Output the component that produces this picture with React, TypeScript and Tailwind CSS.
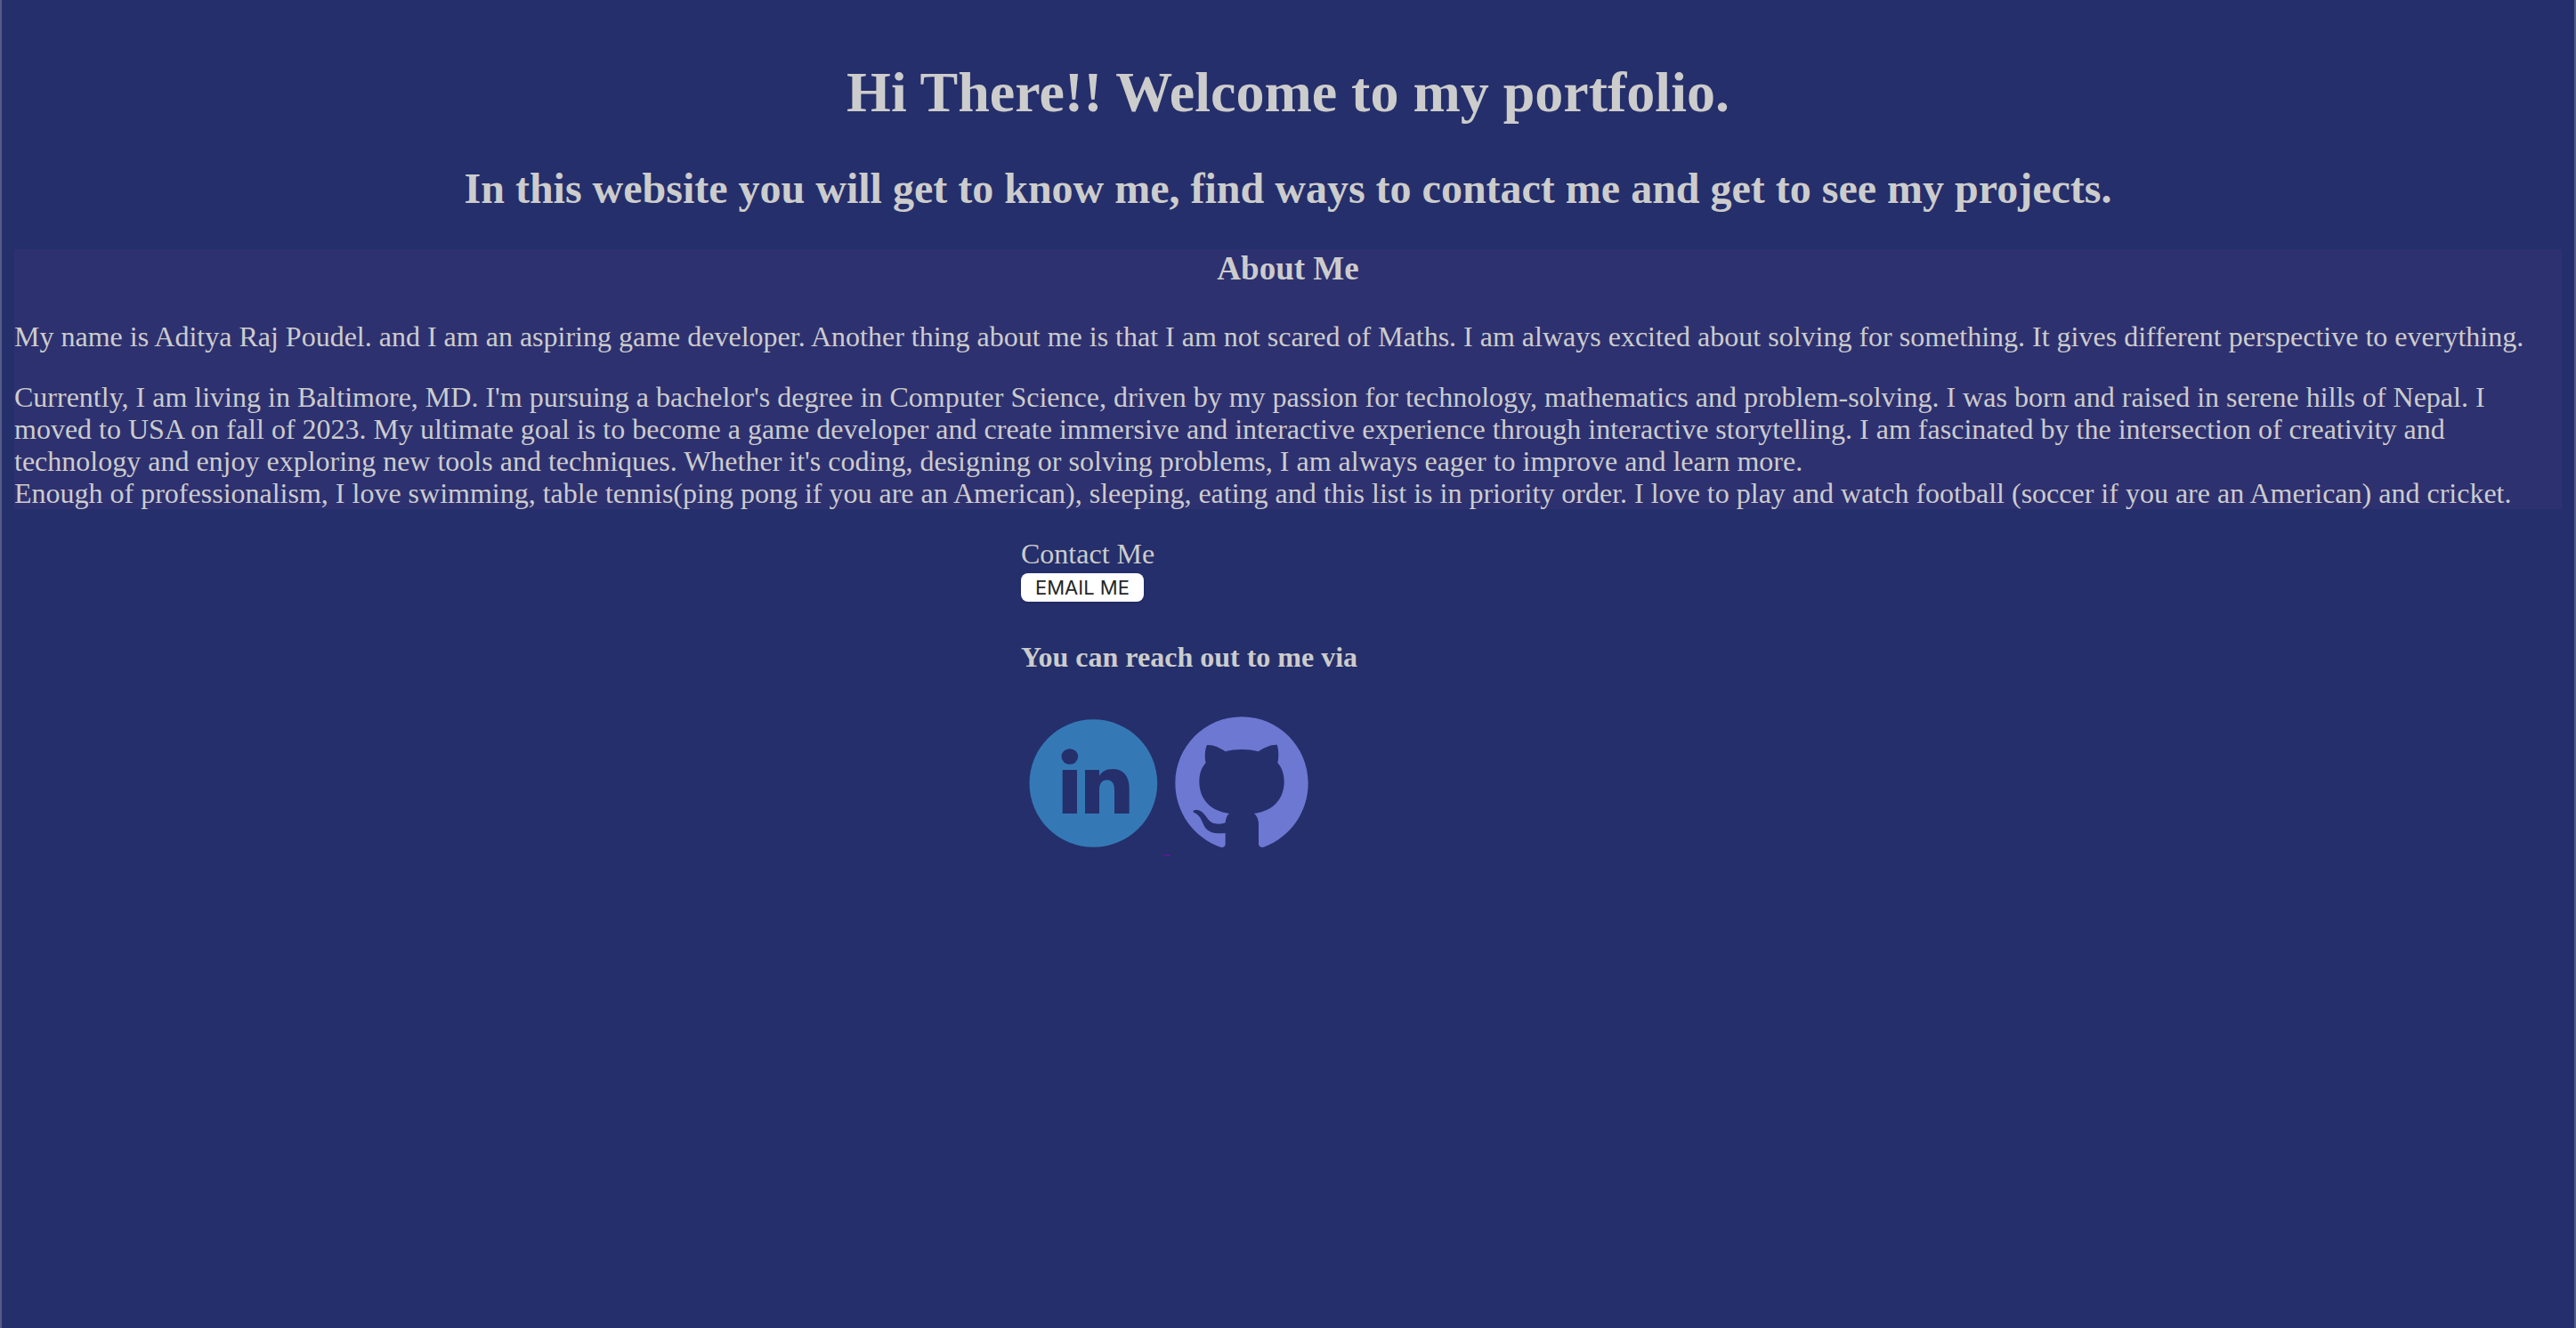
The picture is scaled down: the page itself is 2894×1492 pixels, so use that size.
function LinkedInIcon() {
  return (
    <svg className="size-40" viewBox="21 63 480 480" aria-hidden="true">
      <circle cx="265" cy="303" r="215.5" fill="#3479b5" />
      <g fill="#252f6b">
        <ellipse cx="185.500" cy="213" rx="28" ry="26.500" />
        <path d="M161 258H210V405H161Z" />
        <path d="M237 258H285V279C292 265 307 255 330 255C364 255 386 277 386 320V405H336V327C336 304 328 292 311 292C294 292 285 304 285 327V405H237Z" />
      </g>
    </svg>
  );
}

function GitHubIcon() {
  return (
    <svg className="size-40" viewBox="525 63 480 480" aria-hidden="true">
      <path
        fill="#6c78d2"
        d="M765 79C641 79 541 179 541 303C541 402 604 486 693 518C702 521 710 517 710 508V471C703 472 695 472 687 472C653 472 640 454 633 435C626 418 619 409 606 403C602 401 601 398 601 397C602 394 609 393 614 393C629 394 640 407 649 421C660 437 672 440 687 440C697 440 704 438 710 436C711 423 715 411 723 405C660 396 622 358 622 297C622 271 630 249 644 234C640 220 640 190 648 174C667 172 690 182 710 196C727 191 745 189 765 189C785 189 803 191 821 196C842 182 863 172 884 173C890 190 890 218 886 234C900 250 908 271 908 297C908 358 870 396 807 405C816 412 822 426 822 443V508C822 516 829 521 839 518C927 486 989 402 989 303C989 179 889 79 765 79Z"
      />
    </svg>
  );
}

export default function App() {
  return (
    <div className="flow-root min-h-screen border-x-2 border-[#555c8a] bg-[#252f6b] px-3.5 font-['Liberation_Serif',serif] text-[32px] leading-9 text-[#cccccc]">
      <header className="mt-16 text-center font-bold">
        <h1 className="text-[64px] leading-20">Hi There!! Welcome to my portfolio.</h1>
        <h2 className="mt-10 text-[48px] leading-14">
          In this website you will get to know me, find ways to contact me and get to see my projects.
        </h2>
      </header>

      <section className="mt-10 bg-[#2e3170]">
        <h3 className="text-center text-[37px] leading-[44px] font-bold">About Me</h3>
        <p className="mt-9">
          My name is Aditya Raj Poudel. and I am an aspiring game developer. Another thing about me is that I am not
          scared of Maths. I am always excited about solving for something. It gives different perspective to
          everything.
        </p>
        <p className="mt-8">
          Currently, I am living in Baltimore, MD. I'm pursuing a bachelor's degree in Computer Science, driven by my
          passion for technology, mathematics and problem-solving. I was born and raised in serene hills of Nepal. I
          moved to USA on fall of 2023. My ultimate goal is to become a game developer and create immersive and
          interactive experience through interactive storytelling. I am fascinated by the intersection of creativity and
          technology and enjoy exploring new tools and techniques. Whether it's coding, designing or solving problems, I
          am always eager to improve and learn more.
          <br />
          Enough of professionalism, I love swimming, table tennis(ping pong if you are an American), sleeping, eating
          and this list is in priority order. I love to play and watch football (soccer if you are an American) and
          cricket.
        </p>
      </section>

      <section className="mx-auto mt-8 max-w-[600px]">
        <p>Contact Me</p>
        <button
          type="button"
          className="mt-1 block h-8 rounded-lg bg-white px-4 font-[Inter,sans-serif] text-[22px] leading-8 text-[#262626] shadow-sm"
        >
          EMAIL ME
        </button>
        <h4 className="mt-11 font-bold">You can reach out to me via</h4>
        <div className="mt-11 flex items-end">
          <a href="#linkedin" aria-label="LinkedIn">
            <LinkedInIcon />
          </a>
          <span className="-mb-0.5 h-0.5 w-2 bg-[#551a8b]" />
          <a href="#github" aria-label="GitHub">
            <GitHubIcon />
          </a>
        </div>
      </section>
    </div>
  );
}
